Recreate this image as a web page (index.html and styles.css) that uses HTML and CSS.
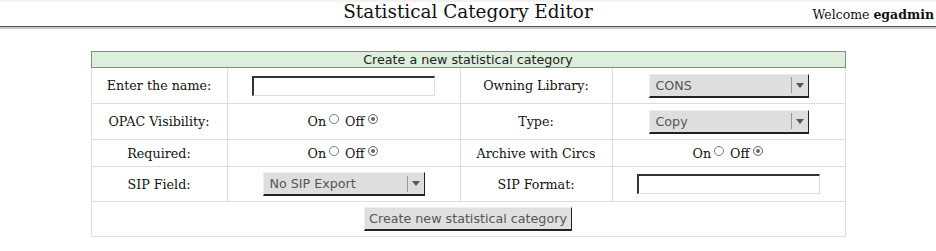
FILE: index.html
```html
<!DOCTYPE html>
<html lang="en">

<head>
    <meta charset="UTF-8">
    <title>Statistical Category Editor</title>
    <link rel="stylesheet" href="styles.css">
</head>

<body>
    <div class="header">
        <span></span>
        <h1 class="title">Statistical Category Editor</h1>
        <span class="welcome">Welcome <b>egadmin</b></span>
    </div>

    <form class="stat-form">
        <div class="form-caption">Create a new statistical category</div>

        <div class="cell label">Enter the name:</div>
        <div class="cell"><input type="text" class="text-input"></div>
        <div class="cell label">Owning Library:</div>
        <div class="cell">
            <span class="select-box">
                <select><option>CONS</option></select>
                <span class="select-arrow"></span>
            </span>
        </div>

        <div class="cell label">OPAC Visibility:</div>
        <div class="cell">
            <span class="toggle">On<input type="radio" name="opac"> Off<input type="radio" name="opac" checked></span>
        </div>
        <div class="cell label">Type:</div>
        <div class="cell">
            <span class="select-box">
                <select><option>Copy</option></select>
                <span class="select-arrow"></span>
            </span>
        </div>

        <div class="cell label">Required:</div>
        <div class="cell">
            <span class="toggle">On<input type="radio" name="required"> Off<input type="radio" name="required" checked></span>
        </div>
        <div class="cell label">Archive with Circs</div>
        <div class="cell">
            <span class="toggle">On<input type="radio" name="archive"> Off<input type="radio" name="archive" checked></span>
        </div>

        <div class="cell label">SIP Field:</div>
        <div class="cell">
            <span class="select-box sip">
                <select><option>No SIP Export</option></select>
                <span class="select-arrow"></span>
            </span>
        </div>
        <div class="cell label">SIP Format:</div>
        <div class="cell"><input type="text" class="text-input"></div>

        <div class="cell full">
            <button type="submit" class="create-button">Create new statistical category</button>
        </div>
    </form>
</body>

</html>
```

FILE: styles.css
```css
* {
    margin: 0;
    padding: 0;
    box-sizing: border-box;
}

body {
    font-family: "DejaVu Serif", serif;
    font-size: 12.7px;
    color: #111;
    background: #fff;
}

.header {
    display: grid;
    grid-template-columns: 1fr auto 1fr;
    align-items: start;
    height: 27px;
    border-top: 2px solid #f2f2f2;
    border-bottom: 1px solid #555;
    box-shadow: 0 2px 0 #c8c8c8;
}

.title {
    font-size: 18.4px;
    font-weight: normal;
    line-height: 20px;
}

.welcome {
    justify-self: end;
    padding-top: 3px;
    padding-right: 2px;
    font-size: 12.5px;
    line-height: 20px;
}

.stat-form {
    display: grid;
    grid-template-columns: 136px 233px 152px 233px;
    grid-template-rows: 17px 36px 36px 27px 35px 35px;
    width: 755px;
    margin: 24px auto 0;
    border-left: 1px solid #ddd;
}

.form-caption {
    grid-column: 1 / -1;
    margin-left: -1px;
    background: #ddeedd;
    border: 1px solid #888;
    font-family: "DejaVu Sans", sans-serif;
    font-size: 12.7px;
    line-height: 15px;
    text-align: center;
    color: #222;
}

.cell {
    display: flex;
    align-items: center;
    justify-content: center;
    border-right: 1px solid #ddd;
    border-bottom: 1px solid #ddd;
}

.full {
    grid-column: 1 / -1;
}

.toggle {
    white-space: pre;
}

input[type="radio"] {
    appearance: none;
    width: 10px;
    height: 10px;
    margin: 0 2px 0 3px;
    vertical-align: 2px;
    border: 1px solid #777;
    border-radius: 50%;
    background: #fff;
}

input[type="radio"]:checked {
    background: #666;
    box-shadow: inset 0 0 0 2px #fff;
}

.text-input {
    width: 183px;
    height: 20px;
    border-top: 2px solid #333;
    border-left: 2px solid #333;
    border-right: 1px solid #ddd;
    border-bottom: 1px solid #ddd;
    background: #fff;
}

.select-box {
    display: flex;
    align-items: center;
    width: 160px;
    height: 24px;
    background: #dedede;
    border-top: 1px solid #eee;
    border-left: 1px solid #eee;
    border-right: 1px solid #222;
    border-bottom: 2px solid #222;
}

.select-box.sip {
    width: 162px;
}

.select-box select {
    appearance: none;
    flex: 1;
    border: none;
    background: transparent;
    padding-left: 6px;
    font-family: "DejaVu Sans", sans-serif;
    font-size: 12.7px;
    color: #555;
}

.select-arrow {
    width: 16px;
    height: 16px;
    margin-right: 1px;
    border-left: 1px solid #999;
    display: flex;
    align-items: center;
    justify-content: center;
}

.select-arrow::after {
    content: "";
    border-left: 4px solid transparent;
    border-right: 4px solid transparent;
    border-top: 5px solid #555;
    margin-left: 2px;
}

.create-button {
    height: 24px;
    padding: 0 4px;
    background: #e0e0e0;
    border-top: 1px solid #eee;
    border-left: 1px solid #eee;
    border-right: 1px solid #222;
    border-bottom: 2px solid #222;
    font-family: "DejaVu Sans", sans-serif;
    font-size: 12.7px;
    color: #555;
}
```
